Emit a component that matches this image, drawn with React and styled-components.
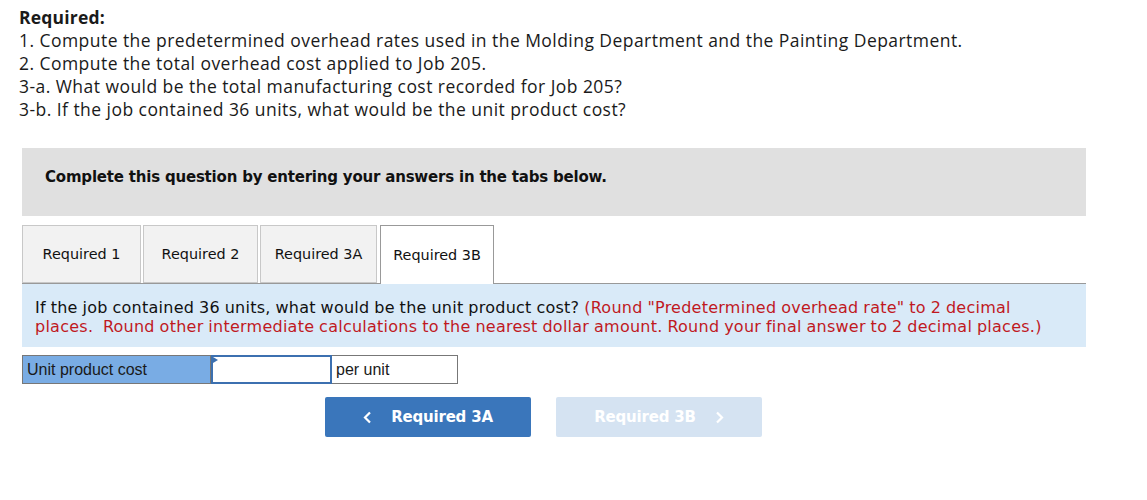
import React from "react";
import styled, { createGlobalStyle } from "styled-components";

const Global = createGlobalStyle`
  html, body { margin: 0; padding: 0; background: #fff; }
  body { font-family: "Open Sans", sans-serif; color: #111; }
`;

const Page = styled.div`
  padding: 6px 0 0 19px;
  width: 1067px;
`;

const Instructions = styled.div`
  font-family: "Open Sans", "Lato", sans-serif;
  font-size: 17.5px;
  letter-spacing: 0.45px;
  line-height: 23px;
  color: #1a1a1a;
`;

const Strong = styled.div`
  font-weight: 700;
  letter-spacing: 0.2px;
`;

const Line = styled.div`
  white-space: nowrap;
`;

const Block = styled.div`
  margin-left: 3px;
  width: 1064px;
`;

const Banner = styled.div`
  margin-top: 27px;
  height: 68px;
  background: #e0e0e0;
  padding: 20px 0 0 23px;
  line-height: 18px;
  font-family: "DejaVu Sans", Verdana, sans-serif;
  font-weight: 700;
  font-size: 15px;
  letter-spacing: -0.2px;
  color: #111;
  box-sizing: border-box;
`;

const Tabs = styled.div`
  margin-top: 9px;
  display: flex;
  align-items: flex-end;
  border-bottom: 1px solid #999;
  height: 58px;
`;

const Tab = styled.div`
  box-sizing: border-box;
  height: ${(p) => (p.$active ? "59px" : "58px")};
  margin-bottom: ${(p) => (p.$active ? "-1px" : "0")};
  width: ${(p) => p.$w}px;
  margin-right: ${(p) => p.$mr}px;
  border: 1px solid ${(p) => (p.$active ? "#999" : "#c8c8c8")};
  border-bottom: ${(p) => (p.$active ? "none" : "1px solid #c8c8c8")};
  background: ${(p) => (p.$active ? "#fff" : "#f2f2f2")};
  display: flex;
  align-items: center;
  justify-content: center;
  padding-bottom: ${(p) => (p.$active ? "1px" : "0")};
  font-family: "DejaVu Sans", Tahoma, sans-serif;
  font-size: 14.4px;
  color: #111;
`;

const Question = styled.div`
  background: #d9eaf8;
  padding: 14px 13px 8px 13px;
  font-family: "DejaVu Sans", Verdana, sans-serif;
  font-size: 16px;
  line-height: 19px;
  letter-spacing: 0.25px;
  word-spacing: -0.5px;
  color: #111;
  height: 63px;
  box-sizing: border-box;
`;

const Red = styled.span`
  color: #c0191f;
`;

const AnswerRow = styled.div`
  margin-top: 8px;
  display: flex;
  height: 29px;
`;

const Label = styled.div`
  box-sizing: border-box;
  width: 189px;
  background: #79ace4;
  border: 1px solid #777;
  display: flex;
  align-items: center;
  padding-left: 4px;
  font-family: "Liberation Sans", Arial, sans-serif;
  font-size: 16px;
  color: #1a1a1a;
`;

const InputWrap = styled.div`
  position: relative;
  width: 121px;
  box-sizing: border-box;
  border: 2px solid #3c70b0;
  background: #fff;
`;

const Marker = styled.div`
  position: absolute;
  left: 0;
  top: 0;
  width: 0;
  height: 0;
  border-top: 3px solid transparent;
  border-bottom: 3px solid transparent;
  border-left: 5px solid #3c70b0;
`;

const Input = styled.input`
  border: none;
  outline: none;
  width: 100%;
  height: 100%;
  box-sizing: border-box;
  background: transparent;
`;

const Unit = styled.div`
  box-sizing: border-box;
  width: 126px;
  border: 1px solid #777;
  border-left: none;
  display: flex;
  align-items: center;
  padding-left: 4px;
  font-family: "Liberation Sans", Arial, sans-serif;
  font-size: 16px;
  color: #1a1a1a;
`;

const Nav = styled.div`
  margin-top: 13px;
  display: flex;
  gap: 25px;
  padding-left: 303px;
`;

const NavButton = styled.button`
  width: 206px;
  height: 40px;
  border: none;
  border-radius: 2px;
  background: ${(p) => (p.$disabled ? "#d5e3f2" : "#3a76bb")};
  color: #fff;
  font-family: "DejaVu Sans", Tahoma, sans-serif;
  font-weight: 700;
  font-size: 15px;
  letter-spacing: -0.2px;
  display: flex;
  align-items: center;
  justify-content: center;
  gap: 19px;
  padding: 0;
  cursor: ${(p) => (p.$disabled ? "default" : "pointer")};
`;

const Chevron = ({ dir }) => (
  <svg width="9" height="13" viewBox="0 0 9 13" fill="none">
    <path
      d={dir === "left" ? "M7 1.5 L2 6.5 L7 11.5" : "M2 1.5 L7 6.5 L2 11.5"}
      stroke="#fff"
      strokeWidth="2.2"
    />
  </svg>
);

export default function App() {
  return (
    <>
      <Global />
      <Page>
        <Instructions>
          <Strong>Required:</Strong>
          <Line>1. Compute the predetermined overhead rates used in the Molding Department and the Painting Department.</Line>
          <Line>2. Compute the total overhead cost applied to Job 205.</Line>
          <Line>3-a. What would be the total manufacturing cost recorded for Job 205?</Line>
          <Line>3-b. If the job contained 36 units, what would be the unit product cost?</Line>
        </Instructions>
        <Block>
          <Banner>Complete this question by entering your answers in the tabs below.</Banner>
          <Tabs>
            <Tab $w={119} $mr={2}>Required 1</Tab>
            <Tab $w={115} $mr={2}>Required 2</Tab>
            <Tab $w={117} $mr={3}>Required 3A</Tab>
            <Tab $w={114} $mr={0} $active>Required 3B</Tab>
          </Tabs>
          <Question>
            If the job contained 36 units, what would be the unit product cost?{" "}
            <Red>
              (Round "Predetermined overhead rate" to 2 decimal places.&nbsp; Round other intermediate calculations to the nearest dollar amount. Round your final answer to 2 decimal places.)
            </Red>
          </Question>
          <AnswerRow>
            <Label>Unit product cost</Label>
            <InputWrap>
              <Marker />
              <Input type="text" aria-label="Unit product cost" />
            </InputWrap>
            <Unit>per unit</Unit>
          </AnswerRow>
          <Nav>
            <NavButton>
              <Chevron dir="left" />
              <span>Required 3A</span>
            </NavButton>
            <NavButton $disabled>
              <span>Required 3B</span>
              <Chevron dir="right" />
            </NavButton>
          </Nav>
        </Block>
      </Page>
    </>
  );
}
